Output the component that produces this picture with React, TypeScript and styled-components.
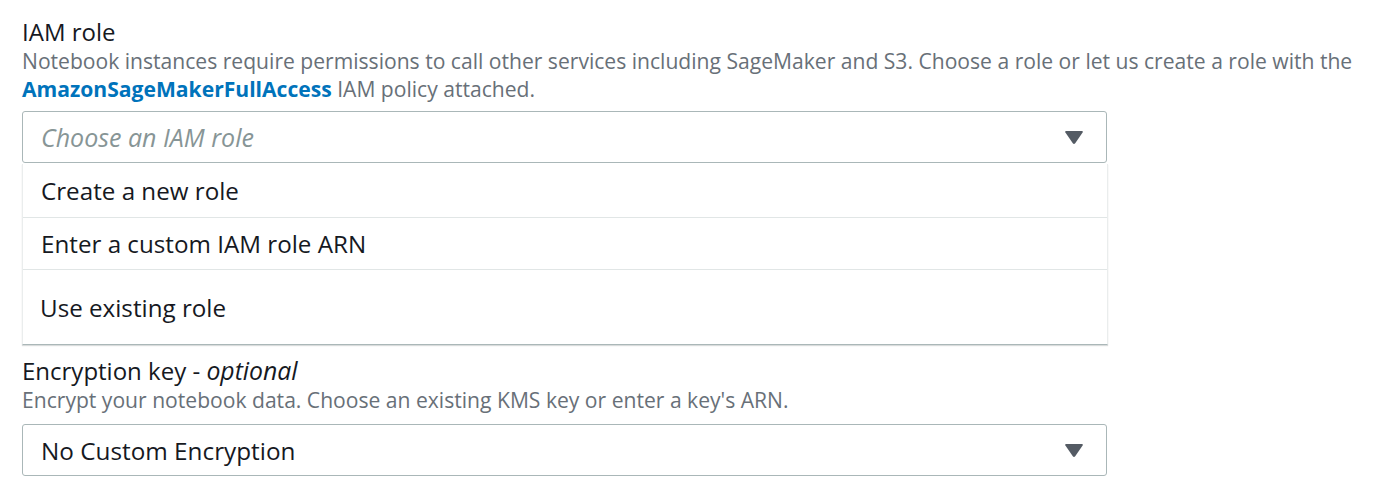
import React from "react";
import styled, { createGlobalStyle } from "styled-components";

const GlobalStyle = createGlobalStyle`
  html, body {
    margin: 0;
    padding: 0;
    background: #ffffff;
  }
  body {
    font-family: "Open Sans", "Noto Sans", Arial, sans-serif;
    color: #16191f;
  }
`;

const Page = styled.div`
  width: 1400px;
  height: 500px;
  box-sizing: border-box;
  padding: 17px 0 0 22px;
  overflow: hidden;
`;

const Field = styled.section<{ $gapAfter?: number }>`
  display: flex;
  flex-direction: column;
  align-items: flex-start;
  margin-bottom: ${(p) => p.$gapAfter ?? 0}px;
`;

const Label = styled.div`
  font-size: 24px;
  line-height: 30px;
  color: #16191f;
`;

const Optional = styled.em`
  font-style: italic;
  font-size: 24.8px;
`;

const Description = styled.p`
  margin: 0;
  font-size: 21.1px;
  line-height: 28px;
  color: #687078;
  white-space: nowrap;
`;

const Link = styled.a`
  color: #0073bb;
  font-weight: 700;
  text-decoration: none;
`;

const SelectBox = styled.div<{ $top: number }>`
  margin-top: ${(p) => p.$top}px;
  width: 1085px;
  height: 52px;
  box-sizing: border-box;
  border: 1px solid #aab7b8;
  border-radius: 3px;
  display: flex;
  align-items: center;
  justify-content: space-between;
  padding: 0 22px 0 18px;
`;

const SelectValue = styled.span<{ $placeholder?: boolean }>`
  font-size: ${(p) => (p.$placeholder ? 25 : 24.3)}px;
  color: ${(p) => (p.$placeholder ? "#879596" : "#16191f")};
  font-style: ${(p) => (p.$placeholder ? "italic" : "normal")};
`;

const Caret = () => (
  <svg width="20" height="15" viewBox="0 0 20 15" aria-hidden="true">
    <path
      d="M2.2 1 H17.8 Q19.4 1 18.6 2.4 L11.2 13.2 Q10 14.8 8.8 13.2 L1.4 2.4 Q0.6 1 2.2 1 Z"
      fill="#545b64"
    />
  </svg>
);

const Menu = styled.ul`
  list-style: none;
  margin: 1px 0 0 0;
  padding: 0;
  width: 1086px;
  box-sizing: border-box;
  border: 1px solid #eaeded;
  border-top: none;
  border-bottom: 1px solid #aab7b8;
  box-shadow: 0 1px 1px rgba(0, 22, 22, 0.15);
`;

const Option = styled.li<{ $height: number; $indent: number }>`
  height: ${(p) => p.$height}px;
  box-sizing: border-box;
  display: flex;
  align-items: center;
  padding-left: ${(p) => p.$indent}px;
  font-size: 24.2px;
  color: #16191f;
  & + & {
    border-top: 1px solid #e1e6e6;
  }
`;

const options = [
  { label: "Create a new role", height: 53, indent: 18 },
  { label: "Enter a custom IAM role ARN", height: 52, indent: 18 },
  { label: "Use existing role", height: 75, indent: 17 },
];

export default function App() {
  return (
    <>
      <GlobalStyle />
      <Page>
        <Field $gapAfter={10}>
          <Label>IAM role</Label>
          <Description>
            Notebook instances require permissions to call other services including SageMaker and S3.
            Choose a role or let us create a role with the
            <br />
            <Link href="#">AmazonSageMakerFullAccess</Link> IAM policy attached.
          </Description>
          <SelectBox $top={8}>
            <SelectValue $placeholder>Choose an IAM role</SelectValue>
            <Caret />
          </SelectBox>
          <Menu>
            {options.map((o) => (
              <Option key={o.label} $height={o.height} $indent={o.indent}>
                {o.label}
              </Option>
            ))}
          </Menu>
        </Field>
        <Field>
          <Label>
            Encryption key - <Optional>optional</Optional>
          </Label>
          <Description>
            Encrypt your notebook data. Choose an existing KMS key or enter a key's ARN.
          </Description>
          <SelectBox $top={10}>
            <SelectValue>No Custom Encryption</SelectValue>
            <Caret />
          </SelectBox>
        </Field>
      </Page>
    </>
  );
}
